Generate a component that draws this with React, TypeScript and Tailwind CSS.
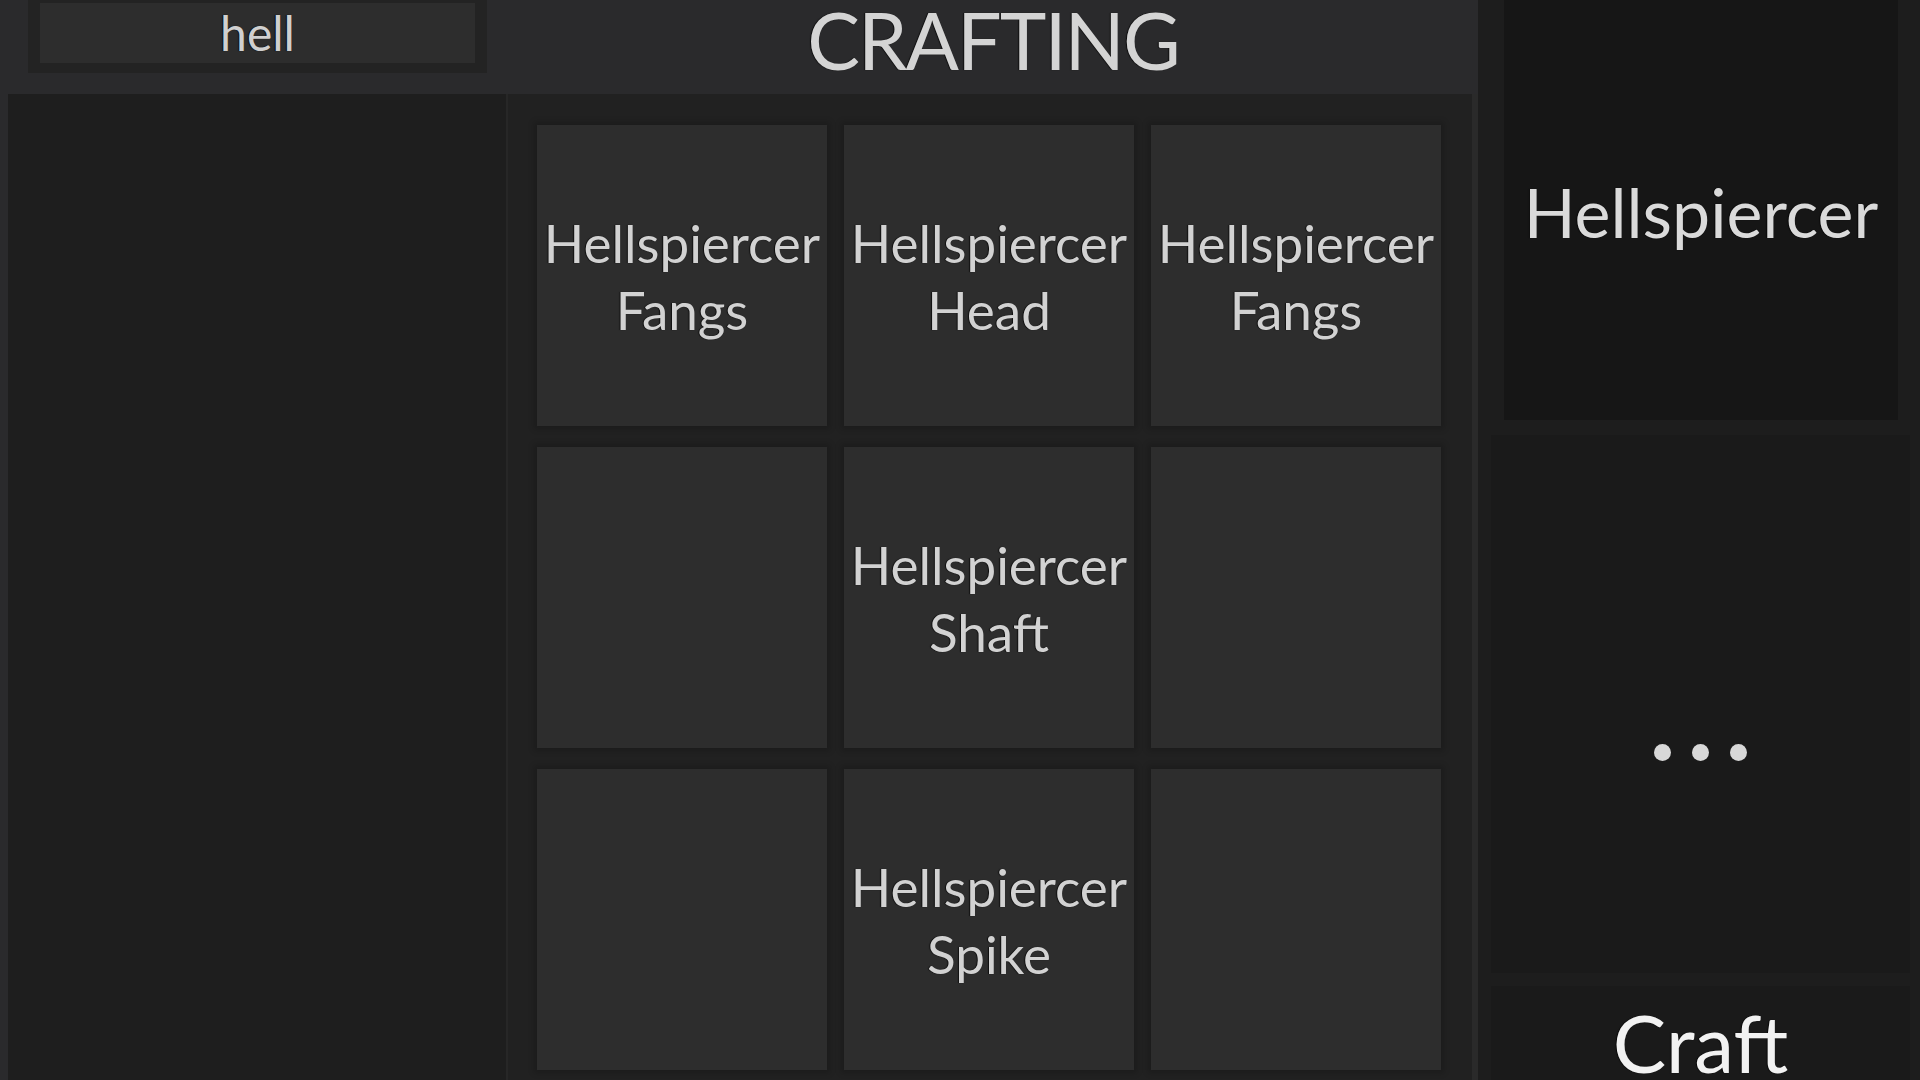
import React from 'react';

const font = { fontFamily: 'Lato, "Open Sans", sans-serif' };

const slots: (string[] | null)[] = [
  ['Hellspiercer', 'Fangs'],
  ['Hellspiercer', 'Head'],
  ['Hellspiercer', 'Fangs'],
  null,
  ['Hellspiercer', 'Shaft'],
  null,
  null,
  ['Hellspiercer', 'Spike'],
  null,
];

function Slot({ lines }: { lines: string[] | null }) {
  return (
    <div className="bg-[#2d2d2d] shadow-[0_0_6px_3px_rgba(0,0,0,0.18)] flex flex-col items-center justify-center">
      {lines &&
        lines.map((l, i) => (
          <span
            key={i}
            className="text-[53px] leading-[67px] text-[#d2d2d2] [text-shadow:-1px_0_1px_rgba(0,0,0,0.7)]"
          >
            {l}
          </span>
        ))}
    </div>
  );
}

export default function App() {
  return (
    <div className="w-[1920px] h-[1080px] flex bg-[#2a2a2c] overflow-hidden" style={font}>
      {/* Main frame */}
      <div className="w-[1478px] flex flex-col">
        <div className="h-[94px] flex shrink-0">
          <div className="w-[508px] pl-[28px]">
            <div className="w-[459px] h-[73px] bg-[#232323] pl-[12px] pr-[12px] pt-[3px] pb-[10px]">
              <div className="h-full bg-[#2d2d2d] flex items-center justify-center">
                <span className="text-[48px] leading-none text-[#d0d0d0] [text-shadow:-1px_0_1px_rgba(0,0,0,0.7)]">
                  hell
                </span>
              </div>
            </div>
          </div>
          <div className="flex-1 flex justify-center items-start">
            <span className="text-[79px] leading-none tracking-[-0.025em] text-[#d4d4d4] [text-shadow:-1px_0_1px_rgba(0,0,0,0.7)]">
              CRAFTING
            </span>
          </div>
        </div>

        <div className="flex-1 flex pl-[8px]">
          {/* Item list */}
          <div className="w-[500px] bg-[#1e1e1e] border-r-2 border-[#272727]" />

          {/* Recipe grid */}
          <div className="flex-1 bg-[#212121] pt-[31px] pl-[29px] border-r-[6px] border-[#2a2a2a]">
            <div className="grid grid-cols-[290px_290px_290px] grid-rows-[301px_301px_301px] gap-x-[17px] gap-y-[21px]">
              {slots.map((s, i) => (
                <Slot key={i} lines={s} />
              ))}
            </div>
          </div>
        </div>
      </div>

      {/* Result column */}
      <div className="flex-1 bg-[#1d1d1d] flex flex-col">
        <div className="ml-[26px] w-[394px] h-[420px] bg-[#161616] flex items-center justify-center shrink-0">
          <span className="text-[68px] leading-none text-[#dadada] pt-[4px] [text-shadow:-1px_0_1px_rgba(0,0,0,0.7)]">
            Hellspiercer
          </span>
        </div>
        <div className="ml-[13px] mt-[15px] w-[419px] h-[538px] bg-[#1a1a1a] flex items-center justify-center pt-[96px] shrink-0">
          <div className="flex gap-[21px]">
            <span className="w-[17px] h-[17px] rounded-full bg-[#d8d8d8]" />
            <span className="w-[17px] h-[17px] rounded-full bg-[#d8d8d8]" />
            <span className="w-[17px] h-[17px] rounded-full bg-[#d8d8d8]" />
          </div>
        </div>
        <div className="ml-[13px] mt-[13px] w-[419px] flex-1 bg-[#1a1a1a] flex justify-center pt-[16px]">
          <span className="text-[80px] leading-none text-[#f2f2f2] [text-shadow:-1px_0_1px_rgba(0,0,0,0.7)]">
            Craft
          </span>
        </div>
      </div>
    </div>
  );
}
